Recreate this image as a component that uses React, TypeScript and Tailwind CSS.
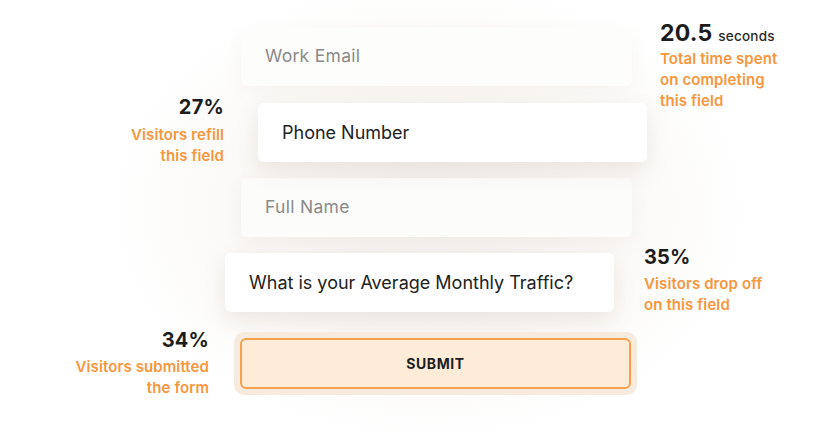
import React from 'react';

type Note = { value: string; unit?: string; lines: string[]; align: 'left' | 'right'; big?: boolean; gap?: string };

function Annotation({ value, unit, lines, align, big, gap = 'mt-[2px]' }: Note) {
  return (
    <div className={align === 'right' ? 'text-right whitespace-nowrap' : 'text-left whitespace-nowrap'}>
      <div className={`${big ? 'text-[23px]' : 'text-[20px]'} leading-[28px] font-bold text-[#1c1c1c] tracking-[0.2px]`}>
        {value}
        {unit && <span className="ml-[6px] text-[13.5px] font-medium text-[#2a2a2a]">{unit}</span>}
      </div>
      <div className={`${gap} text-[15px] leading-[21px] font-semibold text-[#f7963c] tracking-[0.1px]`}>
        {lines.map((l) => (
          <div key={l}>{l}</div>
        ))}
      </div>
    </div>
  );
}

export default function App() {
  return (
    <div
      className="w-[821px] h-[432px] bg-white overflow-hidden bg-[radial-gradient(ellipse_320px_230px_at_430px_210px,#f5f2ef_0%,#faf8f6_55%,#ffffff_100%)]"
      style={{ fontFamily: 'Inter, "Noto Sans", sans-serif' }}
    >
      <div className="flex flex-col items-start pt-[27px] pl-[225px]">
        {/* Work Email */}
        <div className="relative ml-[16px] w-[391px] h-[59px] rounded-[6px] bg-[#fdfdfc] shadow-[0_6px_18px_rgba(140,110,80,0.05)] flex items-center pl-[24px]">
          <span className="text-[17.5px] tracking-[0.3px] text-[#8a8a8a]">Work Email</span>
          <div className="absolute left-full ml-[28px] top-[-8px]">
            <Annotation
              value="20.5"
              unit="seconds"
              big
              gap="mt-[-2px]"
              lines={['Total time spent', 'on completing', 'this field']}
              align="left"
            />
          </div>
        </div>

        {/* Phone Number */}
        <div className="relative mt-[17px] ml-[33px] w-[389px] h-[59px] rounded-[6px] bg-white shadow-[0_8px_22px_rgba(120,90,60,0.13)] flex items-center pl-[24px]">
          <span className="text-[18px] text-[#222]">Phone Number</span>
          <div className="absolute right-full mr-[34px] top-[-10px]">
            <Annotation value="27%" gap="mt-[3px]" lines={['Visitors refill', 'this field']} align="right" />
          </div>
        </div>

        {/* Full Name */}
        <div className="mt-[16px] ml-[16px] w-[391px] h-[59px] rounded-[6px] bg-[#fcfcfb] shadow-[0_6px_18px_rgba(140,110,80,0.07)] flex items-center pl-[24px]">
          <span className="text-[17.5px] tracking-[0.3px] text-[#8a8a8a]">Full Name</span>
        </div>

        {/* Monthly traffic */}
        <div className="relative mt-[16px] w-[389px] h-[59px] rounded-[6px] bg-white shadow-[0_8px_22px_rgba(120,90,60,0.13)] flex items-center pl-[24px]">
          <span className="text-[18px] text-[#222]">What is your Average Monthly Traffic?</span>
          <div className="absolute left-full ml-[30px] top-[-10px]">
            <Annotation value="35%" lines={['Visitors drop off', 'on this field']} align="left" />
          </div>
        </div>

        {/* Submit */}
        <div className="relative mt-[20px] ml-[9px] p-[6px] rounded-[10px] bg-[#f7ebe0]">
          <button className="w-[391px] h-[51px] rounded-[6px] border-2 border-[#f8a04c] bg-[#feecd9] text-[14px] font-bold tracking-[0.6px] text-[#1e1e1e]">
            SUBMIT
          </button>
          <div className="absolute right-full mr-[25px] top-[-6px]">
            <Annotation value="34%" lines={['Visitors submitted', 'the form']} align="right" />
          </div>
        </div>
      </div>
    </div>
  );
}
